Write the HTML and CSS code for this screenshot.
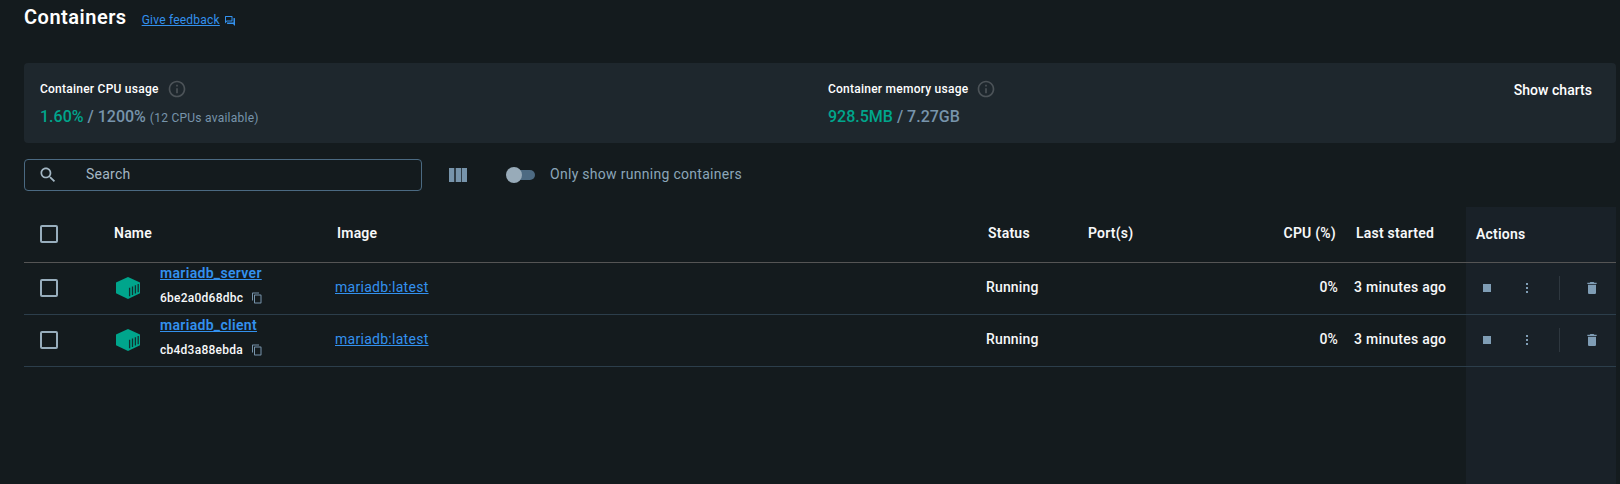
FILE: index.html
```html
<!DOCTYPE html>
<html lang="en">
<head>
<meta charset="utf-8">
<title>Containers</title>
<link rel="stylesheet" href="styles.css">
</head>
<body>
<svg class="defs" width="0" height="0">
  <symbol id="info" viewBox="0 0 24 24"><path d="M11 7h2v2h-2zm0 4h2v6h-2zm1-9C6.480 2 2 6.480 2 12s4.480 10 10 10 10-4.480 10-10S17.520 2 12 2zm0 18c-4.410 0-8-3.590-8-8s3.590-8 8-8 8 3.590 8 8-3.590 8-8 8z"/></symbol>
  <symbol id="copy" viewBox="0 0 24 24"><path d="M16 1H4c-1.100 0-2 .9-2 2v14h2V3h12V1zm3 4H8c-1.100 0-2 .9-2 2v14c0 1.100.9 2 2 2h11c1.100 0 2-.9 2-2V7c0-1.100-.9-2-2-2zm0 16H8V7h11v14z"/></symbol>
  <symbol id="container" viewBox="0 0 24 22"><path fill="#00a58c" d="M12 0 24 5.500V16.200L12 22 0 16.200V5.500z"/><path stroke="#11302e" stroke-width="1.300" d="M13.600 10.800V19.200M16.500 9.500V17.900M19.400 8.300V16.600M22.200 7.100V15.200"/></symbol>
  <symbol id="trash" viewBox="0 0 24 24"><path d="M6 19c0 1.100.9 2 2 2h8c1.100 0 2-.9 2-2V7H6v12zM19 4h-3.500l-1-1h-5l-1 1H5v2h14V4z"/></symbol>
  <symbol id="dots" viewBox="0 0 2 10"><path d="M0 0h2v2H0zM0 4h2v2H0zM0 8h2v2H0z"/></symbol>
</svg>
<main class="page">
  <header class="heading">
    <h1 class="title">Containers</h1>
    <a class="feedback" href="#">Give feedback</a>
    <svg class="feedback-icon" viewBox="0 0 24 24"><path d="M15 4v7H5.170L4 12.170V4h11m1-2H3c-.55 0-1 .45-1 1v14l4-4h10c.55 0 1-.45 1-1V3c0-.55-.45-1-1-1zm5 4h-2v9H6v2c0 .55.45 1 1 1h11l4 4V7c0-.55-.45-1-1-1z"/></svg>
  </header>

  <section class="usage">
    <div class="metric metric-cpu">
      <div class="metric-label">Container CPU usage <svg class="info"><use href="#info"/></svg></div>
      <div class="metric-value"><span class="used">1.60%</span> / 1200% <span class="note">(12 CPUs available)</span></div>
    </div>
    <div class="metric">
      <div class="metric-label">Container memory usage <svg class="info"><use href="#info"/></svg></div>
      <div class="metric-value"><span class="used">928.5MB</span> / 7.27GB</div>
    </div>
    <button class="charts">Show charts</button>
  </section>

  <section class="toolbar">
    <label class="search">
      <svg class="search-icon" viewBox="0 0 24 24"><path d="M15.500 14h-.79l-.28-.27C15.410 12.590 16 11.110 16 9.500 16 5.910 13.090 3 9.500 3S3 5.910 3 9.500 5.910 16 9.500 16c1.610 0 3.090-.59 4.230-1.570l.27.28v.79l5 4.990L20.490 19l-4.990-5zm-6 0C7.010 14 5 11.990 5 9.500S7.010 5 9.500 5 14 7.010 14 9.500 11.990 14 9.500 14z"/></svg>
      <input class="search-input" placeholder="Search">
    </label>
    <div class="columns"><i></i><i></i><i></i></div>
    <div class="switch"><i class="knob"></i></div>
    <span class="switch-label">Only show running containers</span>
  </section>

  <section class="table">
    <div class="row head">
      <div><i class="check"></i></div>
      <div class="h-name">Name</div>
      <div class="h-cell">Image</div>
      <div class="h-cell">Status</div>
      <div class="h-port">Port(s)</div>
      <div class="h-cpu">CPU (%)</div>
      <div class="h-cell">Last started</div>
      <div class="h-actions">Actions</div>
    </div>
    <div class="row">
      <div><i class="check"></i></div>
      <div class="name-cell">
        <svg class="box"><use href="#container"/></svg>
        <div class="names">
          <a class="name" href="#">mariadb_server</a>
          <div class="id">6be2a0d68dbc<svg class="copy"><use href="#copy"/></svg></div>
        </div>
      </div>
      <div class="text"><a class="image" href="#">mariadb:latest</a></div>
      <div class="text">Running</div>
      <div></div>
      <div class="text cpu">0%</div>
      <div class="text started">3 minutes ago</div>
      <div class="actions"><i class="stop"></i><svg class="dots"><use href="#dots"/></svg><i class="divider"></i><svg class="trash"><use href="#trash"/></svg></div>
    </div>
    <div class="row">
      <div><i class="check"></i></div>
      <div class="name-cell">
        <svg class="box"><use href="#container"/></svg>
        <div class="names">
          <a class="name" href="#">mariadb_client</a>
          <div class="id">cb4d3a88ebda<svg class="copy"><use href="#copy"/></svg></div>
        </div>
      </div>
      <div class="text"><a class="image" href="#">mariadb:latest</a></div>
      <div class="text">Running</div>
      <div></div>
      <div class="text cpu">0%</div>
      <div class="text started">3 minutes ago</div>
      <div class="actions"><i class="stop"></i><svg class="dots"><use href="#dots"/></svg><i class="divider"></i><svg class="trash"><use href="#trash"/></svg></div>
    </div>
  </section>
</main>
</body>
</html>
```

FILE: styles.css
```css
* { box-sizing: border-box; }
body {
  margin: 0;
  height: 484px;
  overflow: hidden;
  background: #141b1e;
  color: #f7f8f9;
  font: 500 14px/20px Roboto, sans-serif;
}
svg { display: block; flex: none; }
i { display: block; flex: none; }
.defs { position: absolute; }
.page { height: 484px; padding: 0 4px 0 24px; display: flex; flex-direction: column; }

.heading { height: 63px; display: flex; align-items: flex-start; }
.title { margin: 5px 15px 0 0; font-size: 20px; line-height: 24px; font-weight: 600; letter-spacing: .5px; color: #fff; }
.feedback { margin-top: 10px; font-size: 12px; font-weight: 400; letter-spacing: .22px; color: #3391ee; }
.feedback-icon { width: 12px; height: 12px; margin: 15px 0 0 4px; fill: #3391ee; }

.usage { height: 80px; padding: 16px 24px 0 16px; display: flex; background: #1e272d; border-radius: 4px; }
.metric-cpu { width: 788px; }
.metric-label { height: 20px; display: flex; align-items: center; font-size: 12px; letter-spacing: .24px; color: #fff; }
.info { width: 20px; height: 20px; margin-left: 8px; fill: #4c5358; }
.metric-value { margin-top: 6px; line-height: 24px; font-size: 16px; color: #7794ab; }
.used { color: #00a58c; }
.note { font-size: 12px; font-weight: 400; letter-spacing: .25px; }
.charts { margin: 1px 0 0 auto; padding: 0; border: 0; height: 20px; background: none; color: #fff; font: 500 14px/20px Roboto, sans-serif; letter-spacing: .03px; }

.toolbar { height: 64px; padding-top: 16px; display: flex; align-items: flex-start; }
.search { width: 398px; height: 32px; padding: 0 13px; display: flex; align-items: center; border: 1px solid #4b6a82; border-radius: 4px; }
.search-icon { width: 20px; height: 20px; fill: #a4b7c4; }
.search-input { margin: 0 0 2px 28px; padding: 0; border: 0; background: none; color: #a4b7c4; font: 400 14px/20px Roboto, sans-serif; letter-spacing: .25px; }
.search-input::placeholder { color: #a4b7c4; opacity: 1; }
.columns { display: flex; gap: 1.5px; margin: 9px 0 0 27px; background: #2f3c46; }
.columns i { width: 5px; height: 14px; background: #7794ab; }
.switch { width: 29px; height: 16px; margin: 8px 0 0 39px; padding: 3px 0 0 4px; }
.switch::before { content: ""; display: block; height: 10px; border-radius: 5px; background: #4d6a82; }
.knob { width: 16px; height: 16px; margin: -13px 0 0 -4px; border-radius: 50%; background: #98abb9; position: relative; }
.switch-label { margin: 5px 0 0 15px; font-weight: 400; letter-spacing: .29px; color: #8ba6b9; }

.table { flex: 1; background: linear-gradient(#192128, #192128) 1442px 0 / 150px 100% no-repeat; }
.row {
  height: 52px;
  display: grid;
  grid-template-columns: 90px 221px 651px 102px 178px 88px 112px 150px;
  align-items: center;
  padding-bottom: 1px;
  border-bottom: 1px solid #2c3e4b;
}
.head { height: 56px; padding-bottom: 2px; border-color: #555; font-weight: 600; letter-spacing: .22px; }
.check { width: 18px; height: 18px; margin-left: 16px; border: 2px solid #98aebd; border-radius: 2px; }
.h-name, .h-port { padding-bottom: 2px; }
.h-cell { padding: 0 0 2px 2px; }
.h-cpu { text-align: right; padding: 0 18px 2px 0; }
.h-actions { padding-left: 10px; }
.text { padding-bottom: 2px; letter-spacing: .14px; }
.cpu { text-align: right; padding-right: 16px; }
.started { letter-spacing: .25px; }
.name-cell { display: flex; align-items: center; padding-left: 2px; }
.box { width: 24px; height: 22px; }
.names { margin-left: 20px; height: 50px; }
.name { display: block; height: 25px; line-height: 20px; font-weight: 600; letter-spacing: .32px; color: #3391ee; }
.id { display: flex; align-items: center; font-size: 12px; height: 20px; letter-spacing: .25px; }
.copy { width: 12px; height: 12px; margin-left: 8px; fill: #7794ab; }
.image { color: #3391ee; font-weight: 400; letter-spacing: .28px; }
.actions { display: flex; align-items: center; padding-left: 17px; }
.stop { width: 8px; height: 8px; background: #7f9db5; }
.dots { width: 2px; height: 10px; margin-left: 35px; fill: #7f9db5; }
.divider { width: 1px; height: 24px; margin-left: 31px; background: #2e373f; }
.trash { width: 16px; height: 16px; margin-left: 24px; fill: #7f9db5; }
```
